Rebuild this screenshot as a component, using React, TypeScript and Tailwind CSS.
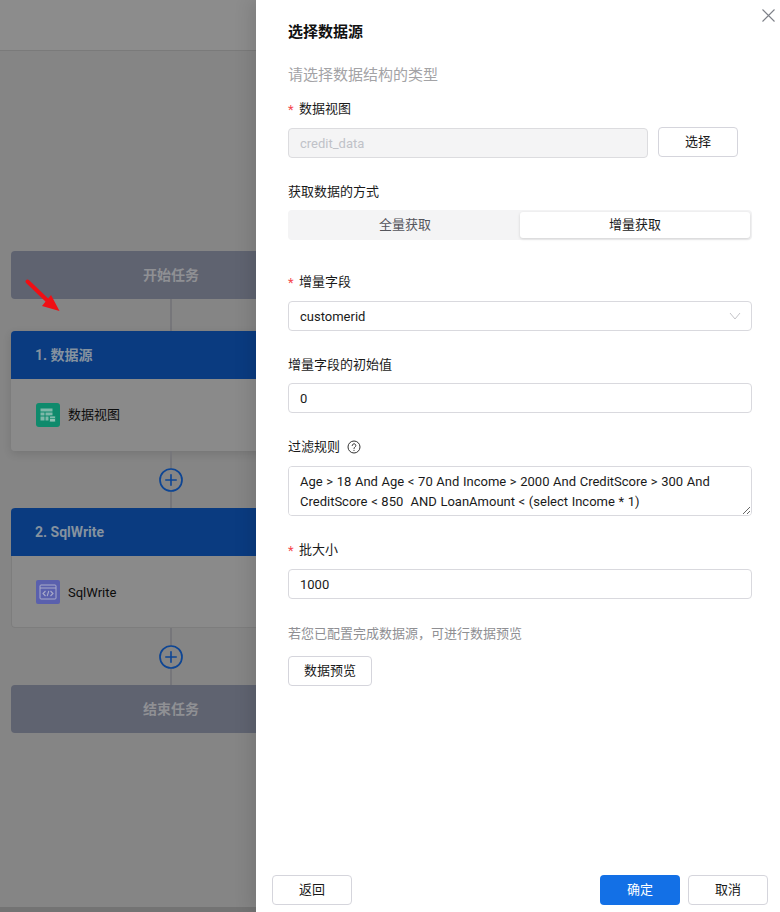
import React from 'react';

const FONT = 'Roboto, "Noto Sans CJK SC", sans-serif';

const Label = ({ text, required, className }: { text: string; required?: boolean; className: string }) => (
  <div className={`flex items-center h-5 text-[13px] text-[#1a1a1a] ${className}`}>
    {required && <span className="w-[11px] text-[#f5484d] text-[13px] leading-5 translate-y-[1px]">*</span>}
    <span>{text}</span>
  </div>
);

const Connector = () => (
  <div className="relative flex justify-center w-full h-[57px]">
    <div className="w-[2px] h-full bg-[#76767a]" />
    <svg className="absolute left-[148px] top-[17px]" width="24" height="24" viewBox="0 0 24 24" fill="none">
      <circle cx="12" cy="12" r="11" fill="#858585" stroke="#0d4594" strokeWidth="1.7" />
      <path d="M12 6.8v10.4M6.8 12h10.4" stroke="#0d4594" strokeWidth="1.6" strokeLinecap="round" />
    </svg>
  </div>
);

const TableIcon = () => (
  <div className="flex items-center justify-center w-6 h-6 rounded-[3px] bg-[#0f8a6c]">
    <svg width="18" height="18" viewBox="0 0 18 18" fill="none">
      <path d="M1.5 2.5h12v3h-12zM1.5 6.5h4v3h-4zM6.5 6.5h7v3h-7zM1.5 10.5h4v4h-4zM6.5 10.5h3v4h-3z" fill="#7fb8a9" />
      <rect x="10.5" y="10" width="6" height="6" rx="1" fill="#8fc1b4" stroke="#0f8a6c" strokeWidth="0.8" />
      <path d="M11 12.4h5" stroke="#0f8a6c" strokeWidth="0.8" />
    </svg>
  </div>
);

const CodeIcon = () => (
  <div className="flex items-center justify-center w-6 h-6 rounded-[2px] bg-[#5a60ad]">
    <svg width="18" height="16" viewBox="0 0 18 16" fill="none" stroke="#a9abc9" strokeWidth="1">
      <rect x="1" y="1" width="16" height="14" rx="1" />
      <path d="M1 4h16" />
      <path d="M6.5 7l-2.5 2.5 2.5 2.5M11.5 7l2.5 2.5-2.5 2.5M9.8 6.8l-1.6 5.4" strokeWidth="1.1" />
    </svg>
  </div>
);

const TaskBar = ({ text }: { text: string }) => (
  <div className="flex items-center justify-center h-12 rounded-[4px] bg-[#5f6370] text-[14px] font-bold text-[#8f9094]">{text}</div>
);

const StepCard = ({ title, name, icon, raised }: { title: string; name: string; icon: React.ReactNode; raised?: boolean }) => (
  <div className={`rounded-[4px] overflow-hidden ${raised ? 'shadow-[0_3px_8px_rgba(0,0,0,0.12)]' : ''}`}>
    <div className="flex items-center h-12 pl-6 bg-[#0a3b80] text-[14px] font-bold text-[#85929f]">{title}</div>
    <div className={`flex items-center gap-2 h-[72px] bg-[#8a8a8a] text-[13px] text-[#0c0c0c] ${raised ? 'pl-[25px]' : 'pl-[24px] border-b border-l border-[#7d7d7d] rounded-b-[4px]'}`}>
      {icon}
      <span className={raised ? '' : 'pt-[2px]'}>{name}</span>
    </div>
  </div>
);

const fieldClass = 'block w-full h-[30px] px-[11px] rounded-[4px] border border-[#d9d9de] bg-white text-[13px] text-[#1a1a1a] outline-none';
const buttonClass = 'flex items-center justify-center h-[30px] rounded-[4px] border border-[#d5d5dc] bg-white text-[13px] text-[#1a1a1a]';

export default function App() {
  return (
    <div className="relative flex w-[780px] h-[912px] overflow-hidden bg-white" style={{ fontFamily: FONT }}>
      {/* Canvas behind the mask */}
      <div className="flex flex-col w-[256px] h-full overflow-hidden bg-[#858585]">
        <div className="shrink-0 h-[51px] bg-[#8c8c8c] border-b border-[#7a7a7a]" />
        <div className="flex flex-col shrink-0 w-[320px] ml-[11px] mt-[200px]">
          <TaskBar text="开始任务" />
          <div className="flex justify-center h-8">
            <div className="w-[2px] h-full bg-[#76767a]" />
          </div>
          <StepCard title="1. 数据源" name="数据视图" icon={<TableIcon />} raised />
          <Connector />
          <StepCard title="2. SqlWrite" name="SqlWrite" icon={<CodeIcon />} />
          <Connector />
          <TaskBar text="结束任务" />
        </div>
        <div className="mt-auto shrink-0 h-[5px] bg-[#737373]" />
      </div>

      {/* Red annotation arrow */}
      <svg className="absolute left-[24px] top-[278px]" width="38" height="36" viewBox="0 0 38 36" fill="none">
        <path d="M3.5 3.5L27 26" stroke="#f00f14" strokeWidth="4" strokeLinecap="round" />
        <path d="M35.5 33L18 28L27 17Z" fill="#f00f14" />
      </svg>

      {/* Drawer */}
      <div className="relative flex flex-col w-[524px] h-full bg-white shadow-[-6px_0_16px_rgba(0,0,0,0.1)]">
        <svg className="absolute left-[506px] top-[9px]" width="13" height="13" viewBox="0 0 13 13" fill="none">
          <path d="M.5.5l12 12M12.5.5l-12 12" stroke="#7d8088" strokeWidth="1.1" />
        </svg>

        <div className="flex flex-col pl-8 pr-7 pt-[21px]">
          <h1 className="text-[15px] leading-[22px] font-bold text-[#111]">选择数据源</h1>
          <p className="mt-[21px] text-[15px] leading-[22px] text-[#a3a3a6]">请选择数据结构的类型</p>

          <Label required text="数据视图" className="mt-[13px]" />
          <div className="flex items-start gap-[10px] mt-[8px]">
            <input
              readOnly
              value="credit_data"
              className="block w-[360px] h-[30px] mt-[1px] px-[11px] rounded-[4px] border border-[#dcdcdf] bg-[#f4f4f5] text-[13px] text-[#c0c2c8] outline-none"
            />
            <div className={`${buttonClass} w-20`}>选择</div>
          </div>

          <Label text="获取数据的方式" className="mt-[24px]" />
          <div className="flex h-[30px] mt-[8px] p-[2px] rounded-[4px] bg-[#f4f4f5] text-[13px]">
            <div className="flex items-center justify-center w-[230px] text-[#55555c]">全量获取</div>
            <div className="flex items-center justify-center w-[230px] rounded-[3px] bg-white text-[#1a1a1a] shadow-[0_1px_3px_rgba(0,0,0,0.15)]">增量获取</div>
          </div>

          <Label required text="增量字段" className="mt-[32px]" />
          <div className={`${fieldClass} flex items-center justify-between mt-[9px] pr-[10px]`}>
            <span className="pt-[2px]">customerid</span>
            <svg width="12" height="8" viewBox="0 0 12 8" fill="none">
              <path d="M1 1l5 6 5-6" stroke="#c4c4c8" strokeWidth="1" />
            </svg>
          </div>

          <Label text="增量字段的初始值" className="mt-[24px]" />
          <input readOnly value="0" className={`${fieldClass} mt-[8px]`} />

          <div className="flex items-center gap-[7px] h-5 mt-[24px] text-[13px] text-[#1a1a1a]">
            <span>过滤规则</span>
            <svg width="14" height="14" viewBox="0 0 14 14" fill="none" stroke="#333" strokeWidth="1">
              <circle cx="7" cy="7" r="6" />
              <path d="M5.2 5.5a1.8 1.8 0 1 1 2.7 1.6c-.6.4-.9.7-.9 1.4" strokeLinecap="round" />
              <circle cx="7" cy="10.3" r=".6" fill="#333" stroke="none" />
            </svg>
          </div>
          <textarea
            readOnly
            value="Age > 18 And Age < 70 And Income > 2000 And CreditScore > 300 And CreditScore < 850  AND LoanAmount < (select Income * 1)"
            className="block w-full h-[50px] mt-[9px] px-[11px] py-[5px] rounded-[4px] border border-[#d9d9de] bg-white text-[13px] leading-5 [word-spacing:0.4px] text-[#1a1a1a] outline-none resize-y"
          />

          <Label required text="批大小" className="mt-[24px]" />
          <input readOnly value="1000" className={`${fieldClass} mt-[9px]`} />

          <p className="mt-[25px] text-[13px] leading-5 text-[#8f8f93]">若您已配置完成数据源，可进行数据预览</p>
          <div className={`${buttonClass} w-[84px] mt-[12px]`}>数据预览</div>
        </div>

        <div className="flex items-center justify-between mt-auto pl-4 pr-3 pb-[7px]">
          <div className={`${buttonClass} w-20`}>返回</div>
          <div className="flex gap-2">
            <div className="flex items-center justify-center w-20 h-[30px] rounded-[4px] bg-[#1370e6] text-[13px] text-white">确定</div>
            <div className={`${buttonClass} w-20`}>取消</div>
          </div>
        </div>
      </div>
    </div>
  );
}
